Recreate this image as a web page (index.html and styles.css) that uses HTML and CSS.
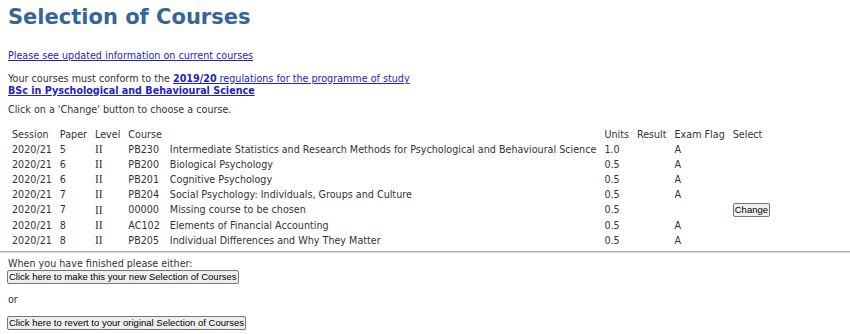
FILE: index.html
```html
<!DOCTYPE html>
<html lang="en">
<head>
    <meta charset="UTF-8">
    <title>Selection of Courses</title>
    <link rel="stylesheet" href="styles.css">
</head>
<body>

    <h1>Selection of Courses</h1>

    <p class="notice"><a href="#">Please see updated information on current courses</a></p>

    <p class="rules">
        Your courses must conform to the <a href="#"><b>2019/20</b> regulations for the programme of study<br>
        <b>BSc in Pyschological and Behavioural Science</b></a>
    </p>

    <p class="hint">Click on a 'Change' button to choose a course.</p>

    <table class="courses">
        <thead>
            <tr>
                <th>Session</th>
                <th>Paper</th>
                <th>Level</th>
                <th>Course</th>
                <th></th>
                <th>Units</th>
                <th>Result</th>
                <th>Exam Flag</th>
                <th>Select</th>
            </tr>
        </thead>
        <tbody>
            <tr>
                <td>2020/21</td><td>5</td><td class="level">II</td><td>PB230</td>
                <td>Intermediate Statistics and Research Methods for Psychological and Behavioural Science</td>
                <td>1.0</td><td></td><td>A</td><td></td>
            </tr>
            <tr>
                <td>2020/21</td><td>6</td><td class="level">II</td><td>PB200</td>
                <td>Biological Psychology</td>
                <td>0.5</td><td></td><td>A</td><td></td>
            </tr>
            <tr>
                <td>2020/21</td><td>6</td><td class="level">II</td><td>PB201</td>
                <td>Cognitive Psychology</td>
                <td>0.5</td><td></td><td>A</td><td></td>
            </tr>
            <tr>
                <td>2020/21</td><td>7</td><td class="level">II</td><td>PB204</td>
                <td>Social Psychology: Individuals, Groups and Culture</td>
                <td>0.5</td><td></td><td>A</td><td></td>
            </tr>
            <tr class="missing">
                <td>2020/21</td><td>7</td><td class="level">II</td><td>00000</td>
                <td>Missing course to be chosen</td>
                <td>0.5</td><td></td><td></td><td><button class="btn">Change</button></td>
            </tr>
            <tr>
                <td>2020/21</td><td>8</td><td class="level">II</td><td>AC102</td>
                <td>Elements of Financial Accounting</td>
                <td>0.5</td><td></td><td>A</td><td></td>
            </tr>
            <tr>
                <td>2020/21</td><td>8</td><td class="level">II</td><td>PB205</td>
                <td>Individual Differences and Why They Matter</td>
                <td>0.5</td><td></td><td>A</td><td></td>
            </tr>
        </tbody>
    </table>

    <hr>

    <p class="finish">When you have finished please either:<br>
        <button class="btn">Click here to make this your new Selection of Courses</button>
    </p>
    <p class="or">or</p>
    <p class="revert">
        <button class="btn">Click here to revert to your original Selection of Courses</button>
    </p>

</body>
</html>
```

FILE: styles.css
```css
body {
    font-family: "DejaVu Sans", Verdana, sans-serif;
    font-size: 9.6px;
    line-height: 11px;
    color: #333;
    background-color: #ffffff;
    margin: 0;
    padding: 0 8px;
}
h1 {
    font-size: 21px;
    line-height: 25px;
    color: #336699;
    margin: 5px 0 0;
}
p {
    margin: 0;
}
a {
    color: #2323c8;
}
.notice {
    margin-top: 20px;
}
.rules {
    margin-top: 12px;
    line-height: 11.5px;
}
.hint {
    margin-top: 8px;
}
.courses {
    margin-top: 11px;
    border-spacing: 2px;
    margin-left: -1px;
}
.courses th,
.courses td {
    padding: 0 3px;
    line-height: 13px;
    text-align: left;
    font-weight: normal;
    white-space: nowrap;
}
.courses .level {
    font-family: "Liberation Serif", "Times New Roman", serif;
    font-size: 11.5px;
}
.courses .missing td {
    line-height: 12px;
}
.btn {
    font-family: "Liberation Sans", Arial, sans-serif;
    font-size: 9.5px;
    line-height: 12px;
    height: 14px;
    padding: 0 1px;
    color: #000;
    background-color: #efefef;
    border: 1px solid #767676;
    border-radius: 2px;
    vertical-align: middle;
}
.courses .btn {
    margin: 0;
}
hr {
    margin: 2px -8px 0;
    border: 0;
    border-top: 1px solid #aaa;
    border-bottom: 1px solid #ddd;
}
.finish {
    margin-top: 5px;
}
.finish .btn {
    margin: 1px 0 0 -1px;
}
.or {
    margin-top: 10px;
}
.revert {
    margin-top: 11px;
}
.revert .btn {
    margin-left: -1px;
}
```
